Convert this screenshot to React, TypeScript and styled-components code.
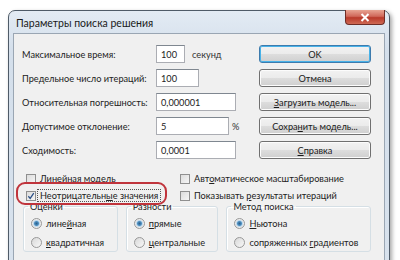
import * as React from "react";
import styled, { createGlobalStyle } from "styled-components";

const GlobalStyle = createGlobalStyle`
  html, body {
    margin: 0;
    padding: 0;
    background: #ffffff;
    overflow: hidden;
  }
  body {
    font-family: Lato, "Liberation Sans", Arial, sans-serif;
    font-size: 9.2px;
    color: #222222;
  }
`;

const Page = styled.div`
  padding: 10px 0 0 8px;
  width: 400px;
  height: 260px;
  box-sizing: border-box;
`;

const Window = styled.div`
  width: 382px;
  height: 262px;
  box-sizing: border-box;
  border: 1px solid #4f5b68;
  border-radius: 7px 7px 0 0;
  background: linear-gradient(#e3ebf4, #d4dfeb 40px, #d8e2ed);
  box-shadow: 2px 2px 4px rgba(0, 0, 0, 0.35);
  padding: 0 4px;
  display: flex;
  flex-direction: column;
`;

const TitleBar = styled.div`
  height: 22px;
  display: flex;
  align-items: flex-start;
  justify-content: space-between;
`;

const Title = styled.div`
  font-size: 10.5px;
  padding: 6px 0 0 3px;
  color: #1a1a1a;
`;

const CloseButton = styled.div`
  width: 40px;
  height: 15px;
  margin-top: -1px;
  border: 1px solid #6e2d26;
  border-top: none;
  border-radius: 0 0 4px 4px;
  background: linear-gradient(#e8a493, #d0685a 45%, #b9392a 55%, #cf6a55);
  display: flex;
  align-items: center;
  justify-content: center;
  box-sizing: border-box;
`;

const Client = styled.div`
  flex: 1;
  background: #f0f0f0;
  border: 1px solid #9aa6b3;
  border-bottom: none;
  padding: 11px 13px 0 8px;
  display: flex;
  flex-direction: column;
`;

const TopSection = styled.div`
  display: flex;
  justify-content: space-between;
`;

const Fields = styled.div`
  display: flex;
  flex-direction: column;
  gap: 6px;
`;

const FieldRow = styled.div`
  height: 18px;
  display: flex;
  align-items: center;
`;

const Label = styled.div`
  width: 134px;
  white-space: nowrap;
`;

const Input = styled.div<{ $w: number }>`
  width: ${(p) => p.$w}px;
  height: 18px;
  box-sizing: border-box;
  border: 1px solid #abadb3;
  border-top-color: #7f8790;
  background: #ffffff;
  padding: 0 4px;
  display: flex;
  align-items: center;
`;

const Suffix = styled.div<{ $gap: number }>`
  margin-left: ${(p) => p.$gap}px;
  color: #333;
`;

const Buttons = styled.div`
  display: flex;
  flex-direction: column;
  gap: 6px;
`;

const Button = styled.div<{ $default?: boolean }>`
  width: 112px;
  height: 18px;
  box-sizing: border-box;
  border: 1px solid ${(p) => (p.$default ? "#3d7bad" : "#707070")};
  border-radius: 3px;
  background: linear-gradient(#f2f2f2, #ebebeb 50%, #dddddd 51%, #cfcfcf);
  box-shadow: ${(p) =>
    p.$default ? "inset 0 0 0 1px #48b2e8" : "inset 0 0 0 1px #fcfcfc"};
  display: flex;
  align-items: center;
  justify-content: center;
  color: #1a1a1a;
  white-space: nowrap;
`;

const Mn = styled.span`
  text-decoration: underline;
  text-underline-offset: 1px;
`;

const Checks = styled.div`
  margin-top: 12px;
  display: grid;
  grid-template-columns: 154px 1fr;
  row-gap: 2px;
  padding-left: 4px;
  white-space: nowrap;
`;

const CheckItem = styled.div`
  position: relative;
  height: 15px;
  display: flex;
  align-items: center;
  gap: 4px;
`;

const Box = styled.div`
  width: 10px;
  height: 10px;
  flex: none;
  box-sizing: border-box;
  border: 1px solid #8f8f8f;
  background: linear-gradient(135deg, #dcdcdc, #f6f6f6);
  display: flex;
  align-items: center;
  justify-content: center;
`;

const Focused = styled.span`
  outline: 1px dotted #555;
  padding: 0 2px;
  margin-left: -2px;
`;

const Highlight = styled.div`
  position: absolute;
  left: -10px;
  top: -6px;
  width: 147px;
  height: 19px;
  border: 2px solid #c0343c;
  border-radius: 9px;
  pointer-events: none;
`;

const Groups = styled.div`
  margin-top: -2px;
  display: flex;
  gap: 8px;
  padding-left: 1px;
  white-space: nowrap;
`;

const Group = styled.fieldset<{ $w: number }>`
  width: ${(p) => p.$w}px;
  height: 51px;
  box-sizing: border-box;
  margin: 0;
  padding: 3px 0 0 7px;
  border: 1px solid #d5dfe5;
  border-radius: 3px;
  box-shadow: inset 1px 1px 0 #ffffff;
  display: flex;
  flex-direction: column;
  gap: 3px;
`;

const Legend = styled.legend`
  padding: 0 2px;
  margin-left: -3px;
  color: #1e1e1e;
`;

const RadioItem = styled.div`
  height: 16px;
  display: flex;
  align-items: center;
  gap: 4px;
`;

const Radio = styled.div<{ $on?: boolean }>`
  width: 11px;
  height: 11px;
  flex: none;
  box-sizing: border-box;
  border-radius: 50%;
  border: 1px solid #999;
  background: ${(p) =>
    p.$on
      ? "radial-gradient(circle, #2c5f8a 0, #4d8fc0 2px, #bcd6ea 3px, #ececec 4px)"
      : "linear-gradient(135deg, #d8d8d8, #f8f8f8)"};
`;

const fields = [
  { label: "Максимальное время:", value: "100", w: 29, suffix: "секунд", gap: 7 },
  { label: "Предельное число итераций:", value: "100", w: 43 },
  { label: "Относительная погрешность:", value: "0,000001", w: 80 },
  { label: "Допустимое отклонение:", value: "5", w: 73, suffix: "%", gap: 3 },
  { label: "Сходимость:", value: "0,0001", w: 80 },
];

function Check({ checked, children }: { checked?: boolean; children: React.ReactNode }) {
  return (
    <>
      <Box>
        {checked && (
          <svg width="8" height="8" viewBox="0 0 9 9">
            <path d="M1.5 4.8 L3.6 7.2 L7.6 1.2" fill="none" stroke="#2b4f86" strokeWidth="1.4" />
          </svg>
        )}
      </Box>
      {children}
    </>
  );
}

export default function App() {
  return (
    <Page>
      <GlobalStyle />
      <Window>
        <TitleBar>
          <Title>Параметры поиска решения</Title>
          <CloseButton>
            <svg width="10" height="9" viewBox="0 0 10 9">
              <path d="M1.5 1 L8.5 8 M8.5 1 L1.5 8" stroke="#ffffff" strokeWidth="2" />
            </svg>
          </CloseButton>
        </TitleBar>
        <Client>
          <TopSection>
            <Fields>
              {fields.map((f) => (
                <FieldRow key={f.label}>
                  <Label>{f.label}</Label>
                  <Input $w={f.w}>{f.value}</Input>
                  {f.suffix && <Suffix $gap={f.gap || 0}>{f.suffix}</Suffix>}
                </FieldRow>
              ))}
            </Fields>
            <Buttons>
              <Button $default>OK</Button>
              <Button>Отмена</Button>
              <Button>
                <Mn>З</Mn>агрузить модель...
              </Button>
              <Button>
                Сохра<Mn>н</Mn>ить модель...
              </Button>
              <Button>
                <Mn>С</Mn>правка
              </Button>
            </Buttons>
          </TopSection>
          <Checks>
            <CheckItem>
              <Check>Линейная модель</Check>
            </CheckItem>
            <CheckItem>
              <Check>
                <span>
                  Авт<Mn>о</Mn>матическое масштабирование
                </span>
              </Check>
            </CheckItem>
            <CheckItem>
              <Highlight />
              <Check checked>
                <Focused>
                  Неотрицательн<Mn>ы</Mn>е значения
                </Focused>
              </Check>
            </CheckItem>
            <CheckItem>
              <Check>
                <span>
                  Показывать <Mn>р</Mn>езультаты итераций
                </span>
              </Check>
            </CheckItem>
          </Checks>
          <Groups>
            <Group $w={95}>
              <Legend>Оценки</Legend>
              <RadioItem>
                <Radio $on />
                <span>
                  лине<Mn>й</Mn>ная
                </span>
              </RadioItem>
              <RadioItem>
                <Radio />
                <span>
                  <Mn>к</Mn>вадратичная
                </span>
              </RadioItem>
            </Group>
            <Group $w={93}>
              <Legend>Разности</Legend>
              <RadioItem>
                <Radio $on />
                <span>
                  <Mn>п</Mn>рямые
                </span>
              </RadioItem>
              <RadioItem>
                <Radio />
                <span>
                  <Mn>ц</Mn>ентральные
                </span>
              </RadioItem>
            </Group>
            <Group $w={145}>
              <Legend>Метод поиска</Legend>
              <RadioItem>
                <Radio $on />
                <span>
                  <Mn>Н</Mn>ьютона
                </span>
              </RadioItem>
              <RadioItem>
                <Radio />
                <span>
                  сопряженных <Mn>г</Mn>радиентов
                </span>
              </RadioItem>
            </Group>
          </Groups>
        </Client>
      </Window>
    </Page>
  );
}
